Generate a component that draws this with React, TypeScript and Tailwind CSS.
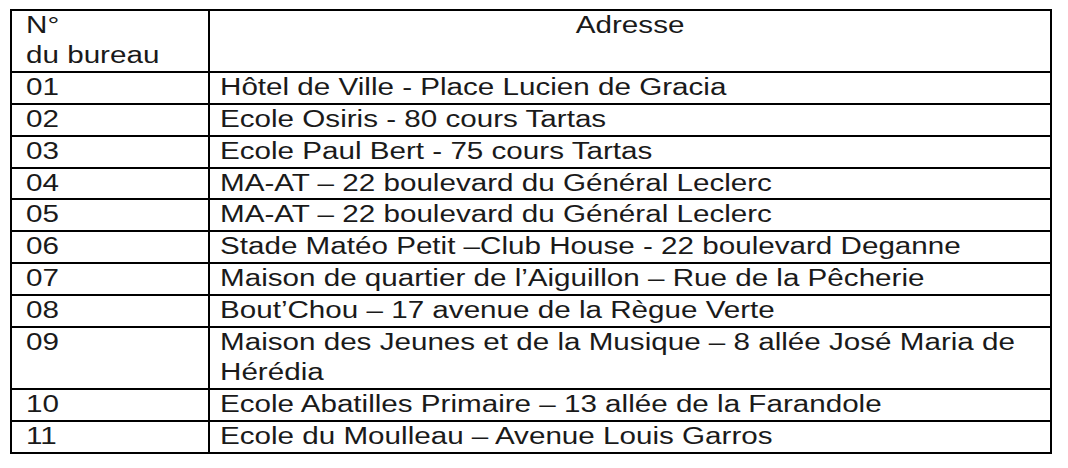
const rows: [string, string[]][] = [
  ['01', ['Hôtel de Ville - Place Lucien de Gracia']],
  ['02', ['Ecole Osiris - 80 cours Tartas']],
  ['03', ['Ecole Paul Bert - 75 cours Tartas']],
  ['04', ['MA-AT – 22 boulevard du Général Leclerc']],
  ['05', ['MA-AT – 22 boulevard du Général Leclerc']],
  ['06', ['Stade Matéo Petit –Club House - 22 boulevard Deganne']],
  ['07', ['Maison de quartier de l’Aiguillon – Rue de la Pêcherie']],
  ['08', ['Bout’Chou – 17 avenue de la Règue Verte']],
  ['09', ['Maison des Jeunes et de la Musique – 8 allée José Maria de', 'Hérédia']],
  ['10', ['Ecole Abatilles Primaire – 13 allée de la Farandole']],
  ['11', ['Ecole du Moulleau – Avenue Louis Garros']],
];

// the source text is set in a wide grotesque: stretch Liberation Sans horizontally
const Wide = ({ children, center }: { children: React.ReactNode; center?: boolean }) => (
  <span
    className={
      center
        ? 'inline-block whitespace-nowrap origin-center scale-x-[1.26]'
        : 'block w-fit whitespace-nowrap origin-left scale-x-[1.26]'
    }
  >
    {children}
  </span>
);

export default function App() {
  return (
    <div className="w-[1068px] h-[468px] bg-white pl-[10px] pt-[9px] overflow-hidden">
      <table className="w-[1042px] border-collapse border-2 border-black table-fixed font-['Liberation_Sans',Arial,sans-serif] text-[23.5px] leading-[29.9px] text-[#1a1a1a]">
        <colgroup>
          <col className="w-[198px]" />
          <col />
        </colgroup>
        <thead>
          <tr>
            <th className="border-2 border-black pl-[14px] pr-2 text-left font-normal align-top">
              <Wide>N°</Wide>
              <Wide>du bureau</Wide>
            </th>
            <th className="border-2 border-black font-normal text-center align-top">
              <Wide center>Adresse</Wide>
            </th>
          </tr>
        </thead>
        <tbody>
          {rows.map(([num, lines]) => (
            <tr key={num}>
              <td className="border-2 border-black pl-[14px] align-top">
                <Wide>{num}</Wide>
              </td>
              <td className="border-2 border-black pl-[10px] pr-[10px] align-top">
                {lines.map((line) => (
                  <Wide key={line}>{line}</Wide>
                ))}
              </td>
            </tr>
          ))}
        </tbody>
      </table>
    </div>
  );
}
